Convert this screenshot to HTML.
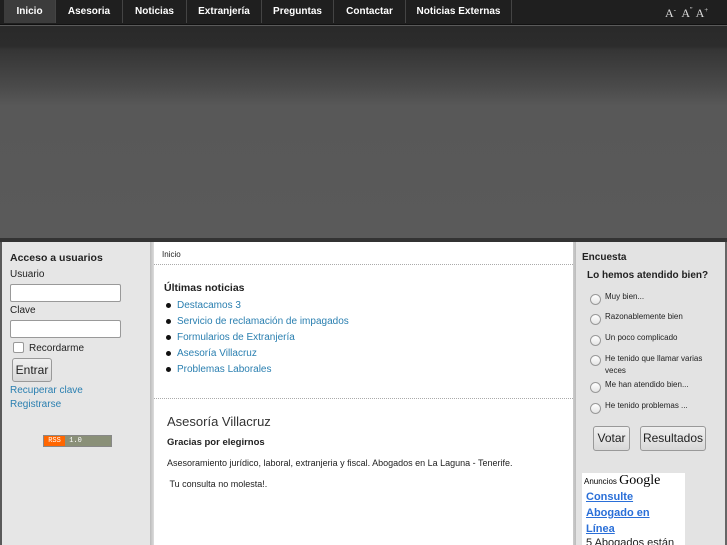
<!DOCTYPE html>
<html style="width:727px;height:545px;overflow:hidden"><head><meta charset="utf-8"><style>
*{margin:0;padding:0;box-sizing:border-box}
body{width:727px;height:545px;overflow:hidden;background:#5a5a5a;font-family:"Liberation Sans",sans-serif;position:relative}
.a{position:absolute}
#nav{left:0;top:0;width:727px;height:25px;background:#1f1f1f;border-bottom:1px solid #111}
#nav span{position:absolute;top:0;height:23px;line-height:23px;color:#fff;font-size:10px;font-weight:bold;text-align:center;border-right:1px solid #444}
#hdr{left:0;top:26px;width:727px;height:214px;background:linear-gradient(#2a2a2a 0px,#2c2c2c 20px,#353535 24px,#3e3e3e 40px,#4a4a4a 60px,#585858 80px,#5a5a5a 100%)}
#bar{left:0;top:238px;width:727px;height:4px;background:#333}
#left{left:2px;top:242px;width:148px;height:303px;background:#e6e6e6}
#lsh{left:150px;top:242px;width:4px;height:303px;background:linear-gradient(90deg,#bbb,#ddd)}
#main{left:154px;top:242px;width:419px;height:303px;background:#fff}
#rsh{left:573px;top:242px;width:3px;height:303px;background:linear-gradient(90deg,#ccc,#bbb)}
#right{left:576px;top:242px;width:149px;height:303px;background:#e3e3e3}
#redge{left:725px;top:242px;width:2px;height:303px;background:#666}
.t{font-size:10px;color:#222;white-space:nowrap}
.lnk{color:#2a7fb0}
.box{position:absolute;width:111px;height:18px;border:1px solid #999;border-radius:2px;background:#fff}
.btn{position:absolute;border:1px solid #999;border-radius:3px;background:linear-gradient(#f0f0f0,#d8d8d8);font-size:12px;color:#222;text-align:center}
.dot{position:absolute;width:5px;height:5px;border-radius:50%;background:#111}
.rad{position:absolute;width:11px;height:11px;border-radius:50%;border:1px solid #999;background:linear-gradient(#fff,#e4e4e4)}
.hr{position:absolute;left:154px;width:419px;border-top:1px dotted #aaa}
.sm{font-size:8px;color:#222;white-space:nowrap}
</style></head><body>
<div id="nav" class="a">
<span style="left:4px;width:52px;background:#3c3c3c">Inicio</span>
<span style="left:56px;width:67px">Asesoria</span>
<span style="left:123px;width:64px">Noticias</span>
<span style="left:187px;width:75px">Extranjería</span>
<span style="left:262px;width:72px">Preguntas</span>
<span style="left:334px;width:72px">Contactar</span>
<span style="left:406px;width:106px">Noticias Externas</span>
<div class="a" style="left:665px;top:6px;color:#ddd;font-family:'Liberation Serif',serif;font-size:12px;white-space:nowrap">A<sup style="font-size:7px">-</sup>&nbsp; A<sup style="font-size:7px">''</sup>&nbsp;A<sup style="font-size:7px">+</sup></div>
</div>
<div id="hdr" class="a"></div>
<div id="bar" class="a"></div>
<div id="left" class="a"></div><div id="lsh" class="a"></div>
<div id="main" class="a"></div><div id="rsh" class="a"></div>
<div id="right" class="a"></div><div id="redge" class="a"></div>

<div class="a t" style="left:10px;top:252px;font-weight:bold;font-size:10.5px">Acceso a usuarios</div>
<div class="a t" style="left:10px;top:269px">Usuario</div>
<div class="box" style="left:10px;top:284px"></div>
<div class="a t" style="left:10px;top:305px">Clave</div>
<div class="box" style="left:10px;top:320px"></div>
<div class="a" style="left:13px;top:342px;width:11px;height:11px;border:1px solid #999;background:#fff;border-radius:2px"></div>
<div class="a t" style="left:29px;top:343px">Recordarme</div>
<div class="btn" style="left:12px;top:358px;width:40px;height:24px;line-height:22px">Entrar</div>
<div class="a t lnk" style="left:10px;top:385px">Recuperar clave</div>
<div class="a t lnk" style="left:10px;top:399px">Registrarse</div>
<div class="a" style="left:43px;top:435px;width:69px;height:12px;border:1px solid #888;background:#8a9078;font:7px 'Liberation Mono',monospace;color:#fff;line-height:10px"><span style="display:inline-block;width:21px;background:#f60;text-align:center">RSS</span> 1.0</div>

<div class="a sm" style="left:162px;top:250px">Inicio</div>
<div class="hr" style="top:264px"></div>
<div class="a t" style="left:164px;top:282px;font-weight:bold;font-size:10.5px">Últimas noticias</div>
<div class="dot" style="left:166px;top:303px"></div><div class="a t lnk" style="left:177px;top:300px">Destacamos 3</div>
<div class="dot" style="left:166px;top:319px"></div><div class="a t lnk" style="left:177px;top:316px">Servicio de reclamación de impagados</div>
<div class="dot" style="left:166px;top:335px"></div><div class="a t lnk" style="left:177px;top:332px">Formularios de Extranjería</div>
<div class="dot" style="left:166px;top:351px"></div><div class="a t lnk" style="left:177px;top:348px">Asesoría Villacruz</div>
<div class="dot" style="left:166px;top:367px"></div><div class="a t lnk" style="left:177px;top:364px">Problemas Laborales</div>
<div class="hr" style="top:398px"></div>
<div class="a" style="left:167px;top:414px;font-size:13px;color:#333">Asesoría Villacruz</div>
<div class="a t" style="left:167px;top:437px;font-weight:bold;font-size:9.5px">Gracias por elegirnos</div>
<div class="a t" style="left:167px;top:458px;font-size:9px">Asesoramiento jurídico, laboral, extranjeria y fiscal. Abogados en La Laguna - Tenerife.</div>
<div class="a t" style="left:167px;top:479px;font-size:9px">&nbsp;Tu consulta no molesta!.</div>

<div class="a t" style="left:582px;top:252px;font-weight:bold">Encuesta</div>
<div class="a t" style="left:587px;top:270px;font-weight:bold">Lo hemos atendido bien?</div>
<div class="rad" style="left:590px;top:294px"></div><div class="a sm" style="left:605px;top:292px">Muy bien...</div>
<div class="rad" style="left:590px;top:314px"></div><div class="a sm" style="left:605px;top:312px">Razonablemente bien</div>
<div class="rad" style="left:590px;top:335px"></div><div class="a sm" style="left:605px;top:333px">Un poco complicado</div>
<div class="rad" style="left:590px;top:355px"></div><div class="a sm" style="left:605px;top:353px;line-height:12px">He tenido que llamar varias<br>veces</div>
<div class="rad" style="left:590px;top:382px"></div><div class="a sm" style="left:605px;top:380px">Me han atendido bien...</div>
<div class="rad" style="left:590px;top:403px"></div><div class="a sm" style="left:605px;top:401px">He tenido problemas ...</div>
<div class="btn" style="left:593px;top:426px;width:37px;height:25px;line-height:23px">Votar</div>
<div class="btn" style="left:640px;top:426px;width:66px;height:25px;line-height:23px">Resultados</div>
<div class="a" style="left:582px;top:473px;width:103px;height:72px;background:#fff;overflow:hidden">
<div class="a" style="left:2px;top:0;font-size:8px;color:#000;white-space:nowrap">Anuncios <span style="font-family:'Liberation Serif',serif;font-size:14px">Google</span></div>
<div class="a" style="left:4px;top:16px;font-size:11px;font-weight:bold;color:#2a6fd8;text-decoration:underline;line-height:16px">Consulte<br>Abogado en<br>Línea</div>
<div class="a" style="left:4px;top:64px;font-size:11px;color:#222;white-space:nowrap">5 Abogados están</div>
</div>
</body></html>
